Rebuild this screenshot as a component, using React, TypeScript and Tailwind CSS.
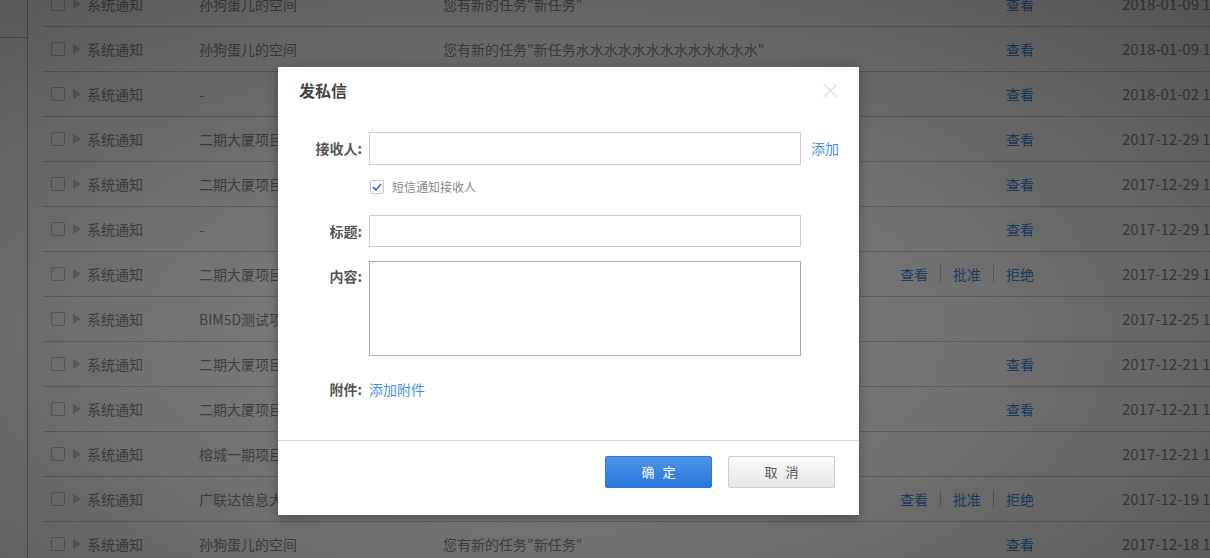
import React from "react";

interface IRow {
  type: string;
  space: string;
  content: string;
  actions: string[];
  date: string;
}

const rows: IRow[] = [
  { type: "系统通知", space: "孙狗蛋儿的空间", content: "您有新的任务\"新任务\"", actions: ["查看"], date: "2018-01-09 15:32" },
  { type: "系统通知", space: "孙狗蛋儿的空间", content: "您有新的任务\"新任务水水水水水水水水水水水水水\"", actions: ["查看"], date: "2018-01-09 11:20" },
  { type: "系统通知", space: "-", content: "您有新的任务\"测试\"", actions: ["查看"], date: "2018-01-02 10:05" },
  { type: "系统通知", space: "二期大厦项目部", content: "您有新的任务\"施工计划\"", actions: ["查看"], date: "2017-12-29 17:41" },
  { type: "系统通知", space: "二期大厦项目部", content: "您有新的任务\"进度检查\"", actions: ["查看"], date: "2017-12-29 16:12" },
  { type: "系统通知", space: "-", content: "您有新的任务\"新任务\"", actions: ["查看"], date: "2017-12-29 14:08" },
  { type: "系统通知", space: "二期大厦项目部", content: "申请加入项目", actions: ["查看", "批准", "拒绝"], date: "2017-12-29 10:30" },
  { type: "系统通知", space: "BIM5D测试项目", content: "您已被移出项目", actions: [], date: "2017-12-25 10:15" },
  { type: "系统通知", space: "二期大厦项目部", content: "您有新的任务\"质量巡检\"", actions: ["查看"], date: "2017-12-21 16:50" },
  { type: "系统通知", space: "二期大厦项目部", content: "您有新的任务\"安全巡检\"", actions: ["查看"], date: "2017-12-21 15:22" },
  { type: "系统通知", space: "榕城一期项目部", content: "您已被移出项目", actions: [], date: "2017-12-21 11:03" },
  { type: "系统通知", space: "广联达信息大厦", content: "申请加入项目", actions: ["查看", "批准", "拒绝"], date: "2017-12-19 14:37" },
  { type: "系统通知", space: "孙狗蛋儿的空间", content: "您有新的任务\"新任务\"", actions: ["查看"], date: "2017-12-18 10:11" },
];

const Row: React.FC<{ row: IRow }> = ({ row }) => (
  <div className="flex h-[45px] items-center border-b border-[#cfcfcf] text-[14px] whitespace-nowrap">
    <span className="ml-[8px] h-[14px] w-[14px] shrink-0 rounded-[2px] border border-[#c4c4c4] bg-white" />
    <svg className="ml-[8px] shrink-0" width="8" height="10" viewBox="0 0 8 10">
      <path d="M0 0 L8 5 L0 10 Z" fill="#c8c8c8" />
    </svg>
    <span className="ml-[6px] w-[112px] shrink-0 text-[#8c8c8c]">{row.type}</span>
    <span className="w-[244px] shrink-0 text-[#8c8c8c]">{row.space}</span>
    <span className="w-[437px] shrink-0 text-[#8c8c8c]">{row.content}</span>
    <div className="flex w-[154px] shrink-0 items-center justify-end">
      {row.actions.map((a, i) => (
        <React.Fragment key={a}>
          {i > 0 && <span className="mx-[12px] h-[18px] w-px bg-[#c8c8c8]" />}
          <span className="text-[#4a86d6]">{a}</span>
        </React.Fragment>
      ))}
    </div>
    <span className="ml-[88px] shrink-0 text-[15px] text-[#8c8c8c]">{row.date}</span>
  </div>
);

const Field: React.FC<{ label: string; children: React.ReactNode; top?: boolean }> = ({ label, children, top }) => (
  <div className={`flex ${top ? "items-start" : "items-center"}`}>
    <span className={`w-[84px] shrink-0 text-right text-[14px] font-bold text-[#555] ${top ? "pt-[4px] leading-[22px]" : ""}`}>
      {label}
    </span>
    <div className="ml-[7px] flex items-center">{children}</div>
  </div>
);

const App: React.FC = () => {
  return (
    <div className="relative h-[558px] w-[1210px] overflow-hidden bg-white font-['Noto_Sans_CJK_SC',sans-serif]">
      <div className="flex h-full">
        <div className="w-[28px] shrink-0 border-r border-[#b4b4b4]">
          <div className="h-[38px] border-b border-[#b4b4b4]" />
        </div>
        <div className="ml-[15px] mt-[-18px] flex-1 overflow-hidden">
          {rows.map((r, i) => (
            <Row key={i} row={r} />
          ))}
        </div>
      </div>

      <div className="absolute inset-0 bg-[radial-gradient(ellipse_at_45%_60%,rgba(0,0,0,0.47),rgba(0,0,0,0.67))]" />

      <div className="absolute left-[278px] top-[67px] flex h-[448px] w-[581px] flex-col bg-white shadow-[0_2px_10px_rgba(0,0,0,0.35)]">
        <div className="relative flex h-[46px] items-center px-[21px]">
          <span className="text-[16px] font-bold text-[#444]">发私信</span>
          <svg className="absolute right-[21px] top-[16px]" width="15" height="15" viewBox="0 0 15 15">
            <path d="M1 1 L14 14 M14 1 L1 14" stroke="#e2e2e2" strokeWidth="1.6" />
          </svg>
        </div>

        <div className="flex h-[327px] flex-col pt-[19px]">
          <Field label="接收人:">
            <div className="h-[33px] w-[432px] border border-[#cccccc]" />
            <span className="ml-[10px] text-[14px] text-[#4a8fe0]">添加</span>
          </Field>

          <div className="mt-[15px] flex h-[14px] items-center pl-[92px]">
            <span className="flex h-[14px] w-[14px] items-center justify-center rounded-[2px] border border-[#c4c4c4]">
              <svg width="10" height="8" viewBox="0 0 10 8">
                <path d="M1 4 L4 7 L9 1" fill="none" stroke="#3a78d8" strokeWidth="1.8" />
              </svg>
            </span>
            <span className="ml-[8px] text-[12px] leading-[14px] text-[#888]">短信通知接收人</span>
          </div>

          <div className="mt-[21px]">
            <Field label="标题:">
              <div className="h-[32px] w-[432px] border border-[#cccccc]" />
            </Field>
          </div>

          <div className="mt-[14px]">
            <Field label="内容:" top>
              <div className="h-[95px] w-[432px] border border-[#a9a9a9]" />
            </Field>
          </div>

          <div className="mt-[23px] flex h-[20px] items-center">
            <span className="w-[84px] shrink-0 text-right text-[14px] font-bold text-[#555]">附件:</span>
            <span className="ml-[7px] text-[14px] text-[#4a8fe0]">添加附件</span>
          </div>
        </div>

        <div className="flex h-[75px] justify-end gap-[16px] border-t border-[#d8d8d8] pr-[24px] pt-[15px]">
          <button className="h-[32px] w-[107px] rounded-[2px] border border-[#2f78d6] bg-[linear-gradient(#4d95e8,#2a77dc)] pl-[0.6em] text-[13px] tracking-[0.6em] text-white">
            确定
          </button>
          <button className="h-[32px] w-[107px] rounded-[2px] border border-[#cfcfcf] bg-[linear-gradient(#fbfbfb,#e6e6e6)] pl-[0.6em] text-[13px] tracking-[0.6em] text-[#555]">
            取消
          </button>
        </div>
      </div>
    </div>
  );
};

export default App;
